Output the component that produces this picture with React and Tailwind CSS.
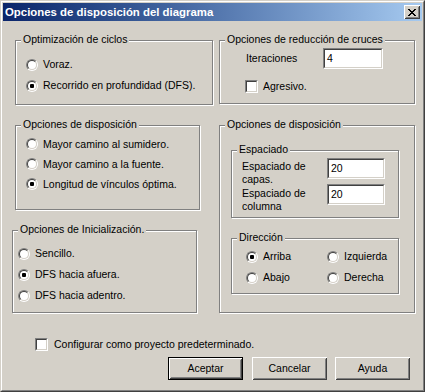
import React from 'react';

// Classic dialog: "Opciones de disposición del diagrama"

function Group({ label, className = '', children }) {
  return (
    <div className={`relative border border-[#808080] shadow-[inset_1px_1px_0_#fff,1px_1px_0_#fff] ${className}`}>
      <span className="absolute left-[5px] top-[-8px] bg-[#d4d0c8] px-[2px] leading-[13px] whitespace-nowrap">
        {label}
      </span>
      {children}
    </div>
  );
}

function Radio({ checked }) {
  return (
    <span className="block w-[12px] h-[12px] shrink-0 rounded-full border border-t-[#808080] border-l-[#808080] border-r-white border-b-white">
      <span className="flex w-full h-full items-center justify-center rounded-full border border-t-[#404040] border-l-[#404040] border-r-[#d4d0c8] border-b-[#d4d0c8] bg-white">
        {checked && <span className="block w-[4px] h-[4px] rounded-[1px] bg-black" />}
      </span>
    </span>
  );
}

function Check() {
  return (
    <span className="block w-[13px] h-[13px] shrink-0 border border-t-[#808080] border-l-[#808080] border-r-white border-b-white">
      <span className="block w-full h-full border border-t-[#404040] border-l-[#404040] border-r-[#d4d0c8] border-b-[#d4d0c8] bg-white" />
    </span>
  );
}

function Field({ value, className = '' }) {
  return (
    <div className={`shrink-0 h-[21px] border border-t-[#808080] border-l-[#808080] border-r-white border-b-white ${className}`}>
      <div className="h-full border border-t-[#404040] border-l-[#404040] border-r-[#d4d0c8] border-b-[#d4d0c8] bg-white pl-[2px] flex items-center">
        {value}
      </div>
    </div>
  );
}

function RadioRow({ checked, label, h = 'h-[21px]' }) {
  return (
    <div className={`flex items-center gap-[5px] ${h}`}>
      <Radio checked={checked} />
      <span className="whitespace-nowrap">{label}</span>
    </div>
  );
}

function Button({ children, isDefault, className = '' }) {
  return (
    <button
      className={`w-[75px] h-[23px] bg-[#d4d0c8] ${isDefault ? 'border border-black' : ''} ${className}`}
    >
      <span className="flex h-full w-full items-center justify-center shadow-[inset_1px_1px_0_#fff,inset_-1px_-1px_0_#404040,inset_2px_2px_0_#d4d0c8,inset_-2px_-2px_0_#808080]">
        {children}
      </span>
    </button>
  );
}

function CloseGlyph() {
  const cells = [
    [0, 0], [1, 0], [6, 0], [7, 0],
    [1, 1], [2, 1], [5, 1], [6, 1],
    [2, 2], [3, 2], [4, 2], [5, 2],
    [3, 3], [4, 3],
    [2, 4], [3, 4], [4, 4], [5, 4],
    [1, 5], [2, 5], [5, 5], [6, 5],
    [0, 6], [1, 6], [6, 6], [7, 6],
  ];
  return (
    <svg width="8" height="7" viewBox="0 0 8 7" shapeRendering="crispEdges">
      {cells.map(([x, y], i) => (
        <rect key={i} x={x} y={y} width="1" height="1" fill="#000" />
      ))}
    </svg>
  );
}

export default function App() {
  return (
    <div className="w-[425px] h-[392px] bg-[#d4d0c8] border border-t-[#d4d0c8] border-l-[#d4d0c8] border-r-[#404040] border-b-[#404040] font-['Liberation_Sans',Arial,sans-serif] text-[10.5px] leading-[13px] text-black">
      <div className="h-full border border-t-white border-l-white border-r-[#808080] border-b-[#808080] p-[1px]">
        {/* Title bar */}
        <div className="h-[18px] flex items-center justify-between bg-gradient-to-r from-[#0a246a] to-[#a6caf0] pl-[2px] pr-[2px]">
          <span className="text-white font-bold text-[11.4px] whitespace-nowrap">
            Opciones de disposición del diagrama
          </span>
          <div className="w-[16px] h-[14px] flex items-center justify-center bg-[#d4d0c8] shadow-[inset_1px_1px_0_#fff,inset_-1px_-1px_0_#404040,inset_2px_2px_0_#d4d0c8,inset_-2px_-2px_0_#808080]">
            <CloseGlyph />
          </div>
        </div>

        {/* Body */}
        <div className="flex items-start pt-[19px]">
          {/* Left column */}
          <div className="ml-[12px] w-[198px] flex flex-col items-start">
            <Group label="Optimización de ciclos" className="w-[198px] h-[65px] pt-[13px] pl-[10px]">
              <RadioRow label="Voraz." />
              <RadioRow checked label="Recorrido en profundidad (DFS)." />
            </Group>

            <Group label="Opciones de disposición" className="mt-[20px] w-[185px] h-[85px] pt-[8px] pl-[10px]">
              <RadioRow h="h-[20px]" label="Mayor camino al sumidero." />
              <RadioRow h="h-[20px]" label="Mayor camino a la fuente." />
              <RadioRow h="h-[20px]" checked label="Longitud de vínculos óptima." />
            </Group>

            <Group label="Opciones de Inicialización." className="mt-[20px] -ml-[3px] w-[185px] h-[83px] pt-[12px] pl-[5px]">
              <RadioRow label="Sencillo." />
              <RadioRow checked label="DFS hacia afuera." />
              <RadioRow label="DFS hacia adentro." />
            </Group>
          </div>

          {/* Right column */}
          <div className="ml-[6px] w-[196px] flex flex-col">
            <Group label="Opciones de reducción de cruces" className="w-[196px] h-[64px] pt-[7px] pl-[26px]">
              <div className="flex items-center h-[21px]">
                <span className="w-[77px]">Iteraciones</span>
                <Field value="4" className="w-[60px]" />
              </div>
              <div className="mt-[11px] -ml-[1px] flex items-center gap-[5px] h-[13px]">
                <Check />
                <span>Agresivo.</span>
              </div>
            </Group>

            <Group label="Opciones de disposición" className="mt-[21px] w-[196px] h-[188px] pt-[24px] pl-[11px]">
              <Group label="Espaciado" className="w-[168px] h-[68px] pt-[7px] pl-[10px]">
                <div className="flex items-start h-[26px]">
                  <div className="w-[85px] mt-[2px]">
                    <div>Espaciado de</div>
                    <div>capas.</div>
                  </div>
                  <Field value="20" className="w-[58px]" />
                </div>
                <div className="flex items-start h-[26px]">
                  <div className="w-[85px] mt-[3px]">
                    <div>Espaciado de</div>
                    <div>columna</div>
                  </div>
                  <Field value="20" className="w-[58px]" />
                </div>
              </Group>

              <Group label="Dirección" className="mt-[20px] w-[168px] h-[56px] pt-[7px] pl-[14px]">
                <div className="grid grid-cols-[81px_auto]">
                  <RadioRow checked label="Arriba" />
                  <RadioRow label="Izquierda" />
                  <RadioRow label="Abajo" />
                  <RadioRow label="Derecha" />
                </div>
              </Group>
            </Group>
          </div>
        </div>

        {/* Default project */}
        <div className="mt-[25px] pl-[32px] flex items-center gap-[6px] h-[13px]">
          <Check />
          <span>Configurar como proyecto predeterminado.</span>
        </div>

        {/* Buttons */}
        <div className="mt-[6px] pl-[165px] flex">
          <Button isDefault>Aceptar</Button>
          <Button className="ml-[9px]">Cancelar</Button>
          <Button className="ml-[8px]">Ayuda</Button>
        </div>
      </div>
    </div>
  );
}
